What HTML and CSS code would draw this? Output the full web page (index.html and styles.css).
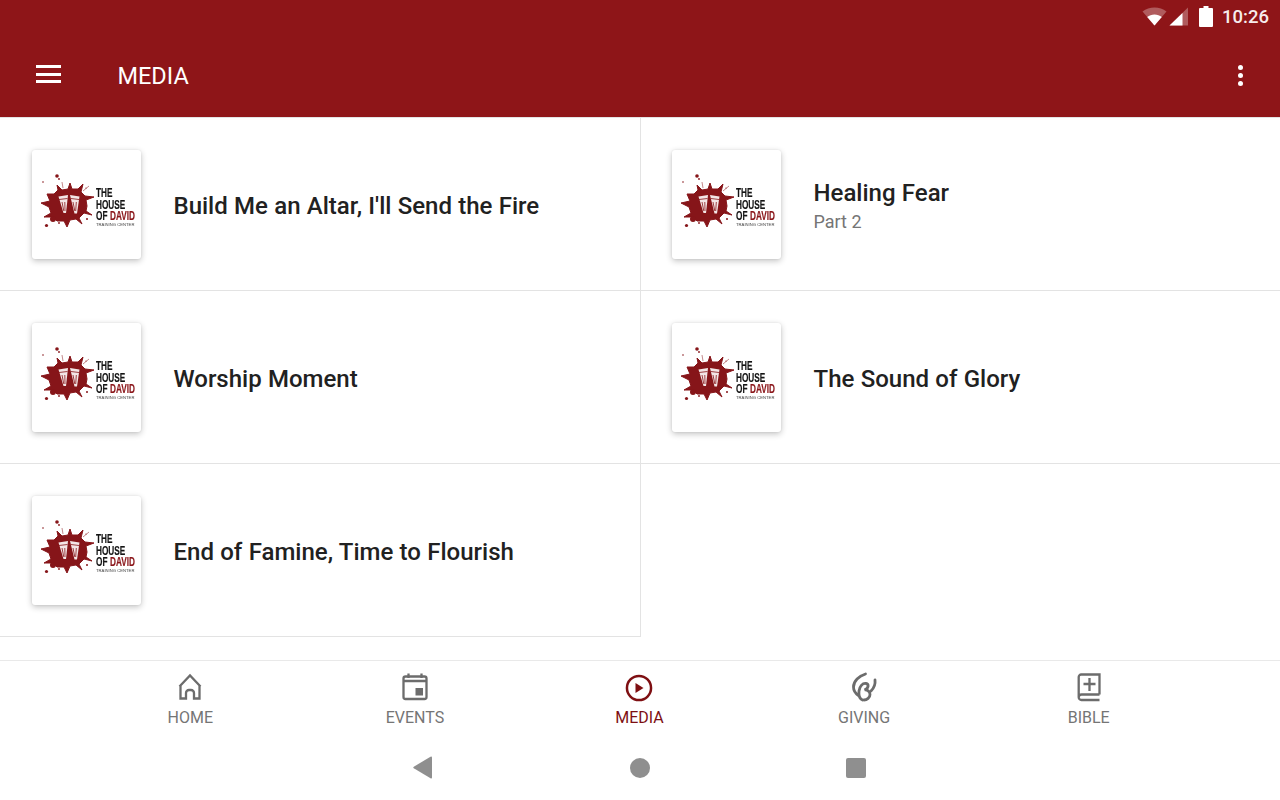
FILE: index.html
```html
<!DOCTYPE html>
<html lang="en">
<head>
<meta charset="utf-8">
<title>Media</title>
<link rel="stylesheet" href="styles.css">
</head>
<body>
<header class="appbar">
  <div class="status">
    <svg class="st-wifi" width="25" height="19" viewBox="0 0 25 19"><path class="dim" d="M12.5 18.5 0.5 4.5C4 1.8 8 .5 12.5 .5s8.500 1.300 12 4z"/><path class="solid" d="M12.500 18.500 5.200 10C7.200 8.400 9.700 7.500 12.500 7.500s5.300.9 7.300 2.500z"/></svg>
    <svg class="st-signal" width="19" height="19" viewBox="0 0 19 19"><path class="dim" d="M19 .5V18.500H.5z"/><path class="solid" d="M13.500 6V18.500H.5z"/></svg>
    <svg class="st-batt" width="14" height="21" viewBox="0 0 14 21"><path class="solid" d="M4.500 0h5v2H13a1 1 0 0 1 1 1v17a1 1 0 0 1-1 1H1a1 1 0 0 1-1-1V3a1 1 0 0 1 1-1h3.500z"/></svg>
    <span class="clock">10:26</span>
  </div>
  <div class="toolbar">
    <div class="burger"><i></i><i></i><i></i></div>
    <h1 class="title">MEDIA</h1>
    <div class="more"><i></i><i></i><i></i></div>
  </div>
</header>

<main class="grid">
  <article class="cell">
    <div class="thumb"><svg class="logo" width="110" height="110" viewBox="0 0 110 110">
      <g class="splat"><path d="M22 44 26 40 25 35 30 40 36 39 38 33 40 39 46 39 51 34 49 42 53 46 62 47 54 50 55 56 54 61 60 65 52 63 47 68 50 74 44 69 38 70 35 77 32 71 25 71 21 67 12 67 19 63 17 57 9 53 18 51 15 44z"/><circle cx="21" cy="69" r="3"/><circle cx="14.500" cy="75.500" r="1.600"/><circle cx="27" cy="73" r=".9"/><circle cx="25" cy="26" r="1.800"/><circle cx="27" cy="29" r=".9"/><circle cx="11" cy="32" r=".8"/><circle cx="54" cy="38" r=".6"/><circle cx="55" cy="69" r="1"/><path class="thin" d="M57 36l-6 5M31 38l-1-6"/></g>
      <g class="mugs"><path d="M26.500 46.500 36 45l-2 18h-2.500z"/><path d="M38 45l9.500 1.500-2.500 17h-2.500z"/></g>
      <g class="mugbars"><path d="M27 49.500l8.500-1M39 48.500l8 1M30 52l1.800 9M32.800 52l.2 9M41 52l1.800 9M44.300 52l-.6 9"/></g>
      <g class="wordmark" transform="translate(64 0) scale(.61 1)">
        <text class="lg" x="0" y="47">THE</text>
        <text class="lg" x="0" y="59">HOUSE</text>
        <text class="lg" x="0" y="70.500">OF</text>
        <text class="lg red" x="23" y="70.500">DAVID</text>
      </g>
      <text class="lg-sm" transform="translate(64 76) scale(1.05 1)">TRAINING CENTER</text>
    </svg></div>
    <div class="text"><h2>Build Me an Altar, I'll Send the Fire</h2></div>
  </article>
  <article class="cell">
    <div class="thumb"><svg class="logo" width="110" height="110" viewBox="0 0 110 110">
      <g class="splat"><path d="M22 44 26 40 25 35 30 40 36 39 38 33 40 39 46 39 51 34 49 42 53 46 62 47 54 50 55 56 54 61 60 65 52 63 47 68 50 74 44 69 38 70 35 77 32 71 25 71 21 67 12 67 19 63 17 57 9 53 18 51 15 44z"/><circle cx="21" cy="69" r="3"/><circle cx="14.500" cy="75.500" r="1.600"/><circle cx="27" cy="73" r=".9"/><circle cx="25" cy="26" r="1.800"/><circle cx="27" cy="29" r=".9"/><circle cx="11" cy="32" r=".8"/><circle cx="54" cy="38" r=".6"/><circle cx="55" cy="69" r="1"/><path class="thin" d="M57 36l-6 5M31 38l-1-6"/></g>
      <g class="mugs"><path d="M26.500 46.500 36 45l-2 18h-2.500z"/><path d="M38 45l9.500 1.500-2.500 17h-2.500z"/></g>
      <g class="mugbars"><path d="M27 49.500l8.500-1M39 48.500l8 1M30 52l1.800 9M32.800 52l.2 9M41 52l1.800 9M44.300 52l-.6 9"/></g>
      <g class="wordmark" transform="translate(64 0) scale(.61 1)">
        <text class="lg" x="0" y="47">THE</text>
        <text class="lg" x="0" y="59">HOUSE</text>
        <text class="lg" x="0" y="70.500">OF</text>
        <text class="lg red" x="23" y="70.500">DAVID</text>
      </g>
      <text class="lg-sm" transform="translate(64 76) scale(1.05 1)">TRAINING CENTER</text>
    </svg></div>
    <div class="text"><h2>Healing Fear</h2><p>Part 2</p></div>
  </article>
  <article class="cell">
    <div class="thumb"><svg class="logo" width="110" height="110" viewBox="0 0 110 110">
      <g class="splat"><path d="M22 44 26 40 25 35 30 40 36 39 38 33 40 39 46 39 51 34 49 42 53 46 62 47 54 50 55 56 54 61 60 65 52 63 47 68 50 74 44 69 38 70 35 77 32 71 25 71 21 67 12 67 19 63 17 57 9 53 18 51 15 44z"/><circle cx="21" cy="69" r="3"/><circle cx="14.500" cy="75.500" r="1.600"/><circle cx="27" cy="73" r=".9"/><circle cx="25" cy="26" r="1.800"/><circle cx="27" cy="29" r=".9"/><circle cx="11" cy="32" r=".8"/><circle cx="54" cy="38" r=".6"/><circle cx="55" cy="69" r="1"/><path class="thin" d="M57 36l-6 5M31 38l-1-6"/></g>
      <g class="mugs"><path d="M26.500 46.500 36 45l-2 18h-2.500z"/><path d="M38 45l9.500 1.500-2.500 17h-2.500z"/></g>
      <g class="mugbars"><path d="M27 49.500l8.500-1M39 48.500l8 1M30 52l1.800 9M32.800 52l.2 9M41 52l1.800 9M44.300 52l-.6 9"/></g>
      <g class="wordmark" transform="translate(64 0) scale(.61 1)">
        <text class="lg" x="0" y="47">THE</text>
        <text class="lg" x="0" y="59">HOUSE</text>
        <text class="lg" x="0" y="70.500">OF</text>
        <text class="lg red" x="23" y="70.500">DAVID</text>
      </g>
      <text class="lg-sm" transform="translate(64 76) scale(1.05 1)">TRAINING CENTER</text>
    </svg></div>
    <div class="text"><h2>Worship Moment</h2></div>
  </article>
  <article class="cell">
    <div class="thumb"><svg class="logo" width="110" height="110" viewBox="0 0 110 110">
      <g class="splat"><path d="M22 44 26 40 25 35 30 40 36 39 38 33 40 39 46 39 51 34 49 42 53 46 62 47 54 50 55 56 54 61 60 65 52 63 47 68 50 74 44 69 38 70 35 77 32 71 25 71 21 67 12 67 19 63 17 57 9 53 18 51 15 44z"/><circle cx="21" cy="69" r="3"/><circle cx="14.500" cy="75.500" r="1.600"/><circle cx="27" cy="73" r=".9"/><circle cx="25" cy="26" r="1.800"/><circle cx="27" cy="29" r=".9"/><circle cx="11" cy="32" r=".8"/><circle cx="54" cy="38" r=".6"/><circle cx="55" cy="69" r="1"/><path class="thin" d="M57 36l-6 5M31 38l-1-6"/></g>
      <g class="mugs"><path d="M26.500 46.500 36 45l-2 18h-2.500z"/><path d="M38 45l9.500 1.500-2.500 17h-2.500z"/></g>
      <g class="mugbars"><path d="M27 49.500l8.500-1M39 48.500l8 1M30 52l1.800 9M32.800 52l.2 9M41 52l1.800 9M44.300 52l-.6 9"/></g>
      <g class="wordmark" transform="translate(64 0) scale(.61 1)">
        <text class="lg" x="0" y="47">THE</text>
        <text class="lg" x="0" y="59">HOUSE</text>
        <text class="lg" x="0" y="70.500">OF</text>
        <text class="lg red" x="23" y="70.500">DAVID</text>
      </g>
      <text class="lg-sm" transform="translate(64 76) scale(1.05 1)">TRAINING CENTER</text>
    </svg></div>
    <div class="text"><h2>The Sound of Glory</h2></div>
  </article>
  <article class="cell">
    <div class="thumb"><svg class="logo" width="110" height="110" viewBox="0 0 110 110">
      <g class="splat"><path d="M22 44 26 40 25 35 30 40 36 39 38 33 40 39 46 39 51 34 49 42 53 46 62 47 54 50 55 56 54 61 60 65 52 63 47 68 50 74 44 69 38 70 35 77 32 71 25 71 21 67 12 67 19 63 17 57 9 53 18 51 15 44z"/><circle cx="21" cy="69" r="3"/><circle cx="14.500" cy="75.500" r="1.600"/><circle cx="27" cy="73" r=".9"/><circle cx="25" cy="26" r="1.800"/><circle cx="27" cy="29" r=".9"/><circle cx="11" cy="32" r=".8"/><circle cx="54" cy="38" r=".6"/><circle cx="55" cy="69" r="1"/><path class="thin" d="M57 36l-6 5M31 38l-1-6"/></g>
      <g class="mugs"><path d="M26.500 46.500 36 45l-2 18h-2.500z"/><path d="M38 45l9.500 1.500-2.500 17h-2.500z"/></g>
      <g class="mugbars"><path d="M27 49.500l8.500-1M39 48.500l8 1M30 52l1.800 9M32.800 52l.2 9M41 52l1.800 9M44.300 52l-.6 9"/></g>
      <g class="wordmark" transform="translate(64 0) scale(.61 1)">
        <text class="lg" x="0" y="47">THE</text>
        <text class="lg" x="0" y="59">HOUSE</text>
        <text class="lg" x="0" y="70.500">OF</text>
        <text class="lg red" x="23" y="70.500">DAVID</text>
      </g>
      <text class="lg-sm" transform="translate(64 76) scale(1.05 1)">TRAINING CENTER</text>
    </svg></div>
    <div class="text"><h2>End of Famine, Time to Flourish</h2></div>
  </article>
</main>

<nav class="tabs">
  <div class="tab">
    <svg class="ico" width="32" height="32" viewBox="0 0 32 32"><path class="ln" d="M5.500 14.500 16 3.500l10.500 11M6.500 14v12.500h5.500V21a3 3 0 0 1 3-3h2a3 3 0 0 1 3 3v5.500h5.500V14"/></svg>
    <span>HOME</span>
  </div>
  <div class="tab">
    <svg class="ico" width="32" height="32" viewBox="0 0 32 32"><path class="ln" d="M5 9h22M9.500 1.500V6M22.500 1.500V6"/><rect class="ln" x="4.500" y="4.500" width="23" height="22.500" rx="2"/><rect class="sqfill" x="16.500" y="16" width="7.500" height="7.500"/></svg>
    <span>EVENTS</span>
  </div>
  <div class="tab on">
    <svg class="ico fill" width="32" height="32" viewBox="0 0 32 32"><path d="M12.500 11v10l8-5z"/><path fill-rule="evenodd" d="M16 2.700a13.300 13.300 0 1 0 0 26.600 13.300 13.300 0 0 0 0-26.600zm0 2.500a10.800 10.800 0 1 1 0 21.600 10.800 10.800 0 0 1 0-21.600z"/></svg>
    <span>MEDIA</span>
  </div>
  <div class="tab">
    <svg class="ico" width="32" height="32" viewBox="0 0 32 32"><path class="ln2" d="M17.500 2C11 4 5.500 9 5.500 15c0 3.500 2 6.500 5 8.500M27 8c.5 4-1 8-4 11M14.500 28c-2.500-1-4-4-3.500-9 .5-4.500 3.500-8 7-7.500 3 .5 3 4.500-1.500 6.500 2.500-.5 5.500 1.500 5.500 4.500 0 3-3 5.500-6 5.500"/></svg>
    <span>GIVING</span>
  </div>
  <div class="tab">
    <svg class="ico" width="32" height="32" viewBox="0 0 32 32"><path class="ln" d="M26.500 22.500H8.500a2.800 2.800 0 0 0-2.800 2.800 2.700 2.700 0 0 0 2.800 2.700h18M5.700 25.300V5a2.500 2.500 0 0 1 2.500-2.500h18.300v20"/><path class="ln" d="M16.500 6v13M10.500 12h12"/></svg>
    <span>BIBLE</span>
  </div>
</nav>

<footer class="sysnav">
  <svg class="back" width="20" height="23" viewBox="0 0 20 23"><path d="M19 1.500v20a1 1 0 0 1-1.500.8L.8 12.300a1 1 0 0 1 0-1.600L17.500.7A1 1 0 0 1 19 1.500z"/></svg>
  <i class="dot"></i>
  <i class="sq"></i>
</footer>
</body>
</html>
```

FILE: styles.css
```css
* { box-sizing: border-box; }
html, body { margin: 0; padding: 0; }
body {
  width: 1280px;
  height: 800px;
  overflow: hidden;
  background: #fff;
  display: flex;
  flex-direction: column;
  font-family: Roboto, "Liberation Sans", sans-serif;
}

/* App bar */
.appbar { height: 118px; background: #8e1518; border-bottom: 1px solid #e3e3e3; color: #fff; flex: none; }
.status { height: 32px; padding: 1px 10px 0 0; display: flex; align-items: center; justify-content: flex-end; }
.status .solid { fill: #fff; }
.status .dim { fill: #fff; fill-opacity: .3; }
.st-wifi { margin-right: 2px; }
.st-signal { margin-right: 11px; }
.st-batt { margin-right: 9px; }
.clock { font-size: 18.500px; font-weight: 500; color: #f6ecec; width: 48px; }
.toolbar { height: 85px; display: flex; align-items: center; padding: 0 36px; }
.burger { width: 25px; display: flex; flex-direction: column; gap: 4.500px; margin-top: -1px; margin-left: -.5px; }
.burger i { display: block; height: 3px; background: #fff; }
.title { margin: 3px 0 0 57px; font-size: 23.500px; font-weight: 400; flex: 1; }
.more { display: flex; flex-direction: column; gap: 3px; margin-top: 1px; margin-right: 1.500px; }
.more i { display: block; width: 5px; height: 5px; border-radius: 50%; background: #fff; }

/* Grid */
.grid { flex: none; height: 519px; display: grid; grid-template-columns: 641px 639px; grid-auto-rows: 173px; }
.cell { display: flex; align-items: flex-start; padding: 32px 0 0 32px; border-bottom: 1px solid #e3e3e3; }
.cell:nth-child(odd) { border-right: 1px solid #e3e3e3; }
.cell:nth-child(even) { padding-left: 31px; }
.thumb { width: 109px; height: 109px; flex: none; overflow: hidden; background: #fff; border-radius: 3px; box-shadow: 0 2px 6px rgba(0,0,0,.24), 0 0 2px rgba(0,0,0,.08); }
.logo { display: block; filter: blur(.4px); }
.splat { fill: #861519; stroke: #861519; stroke-width: 1; stroke-linejoin: round; }
.splat circle { stroke: none; }
.splat .thin { fill: none; stroke-width: .5; }
.mugs { fill: #f3e6e6; }
.mugbars { fill: none; stroke: #861519; stroke-width: .8; }
.lg { font-family: "Liberation Sans", sans-serif; font-weight: 700; font-size: 13.500px; fill: #141414; stroke: #141414; stroke-width: .2; }
.lg.red { fill: #8a1519; stroke: #8a1519; }
.lg-sm { font-family: "Liberation Sans", sans-serif; font-size: 4px; fill: #444; }
.text { margin-left: 32.500px; height: 112px; display: flex; flex-direction: column; justify-content: center; }
.text h2 { margin: 0; font-size: 24px; line-height: 30px; font-weight: 500; color: #212121; word-spacing: .35px; }
.text p { margin: 2px 0 0; font-size: 18px; line-height: 24px; color: #757575; }

/* Bottom tabs */
.tabs { flex: none; margin-top: 23px; height: 80px; border-top: 1px solid #e9e9e9; padding: 12px 79px 0 78px; display: grid; grid-template-columns: repeat(5, 1fr); }
.tab { display: flex; flex-direction: column; align-items: center; color: #757575; font-size: 16px; line-height: 20px; margin-top: -1px; }
.tab span { margin-top: 4px; }
.ico { display: block; }
.ico.fill { fill: #6c6c6c; }
.ico .ln { fill: none; stroke: #6c6c6c; stroke-width: 2.300; }
.ico .ln2 { fill: none; stroke: #6c6c6c; stroke-width: 2.800; stroke-linecap: round; }
.ico .sqfill { fill: #6c6c6c; }
.tab.on { color: #7e0f12; }
.tab.on .ico.fill { fill: #7e0f12; }

/* System nav */
.sysnav { flex: 1; display: grid; grid-template-columns: repeat(3, 216px); justify-content: center; justify-items: center; align-items: center; padding-bottom: 5px; }
.back { fill: #8f8f8f; margin-right: 2px; }
.dot { width: 20px; height: 20px; border-radius: 50%; background: #8f8f8f; }
.sq { width: 20px; height: 20px; border-radius: 2px; background: #8f8f8f; }
```
